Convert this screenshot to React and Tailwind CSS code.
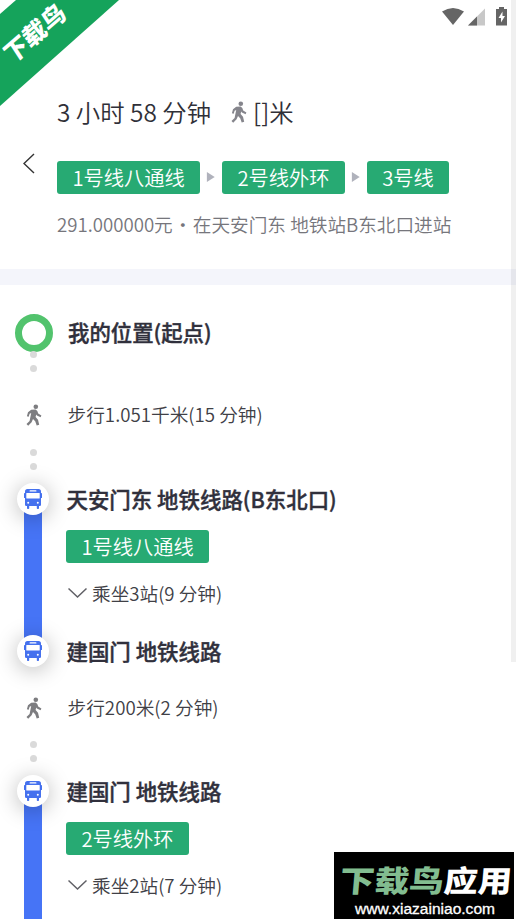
const lines = ["1号线八通线", "2号线外环", "3号线"];

const Walker = ({ className }) => (
  <svg viewBox="0 0 16 22" className={className} fill="currentColor">
    <circle cx="9.8" cy="2.7" r="2.3" />
    <path d="M5.2 5.8L9.6 5.4L11.3 7L12.2 9.6L15.4 11.5L14.6 13.2L10.9 11.4L10.2 10.4L9.6 13L12 15.8L13.2 20.8L10.7 21.5L9.2 17.2L7 15L5.6 18.3L2.2 21.7L0.5 20L3.6 17L5.2 9L3.6 9.8L2.7 12.7L0.9 12.2L2 8.3Z" />
  </svg>
);

const BusStop = () => (
  <div className="relative z-10 flex size-8 shrink-0 items-center justify-center rounded-full bg-white shadow-[0_3px_22px_rgba(0,0,0,0.28)]">
    <svg viewBox="0 0 18 20" className="h-5 w-[18px]" fill="#4571ee">
      <path d="M3.4 0H14.6Q17 0 17 2.6V15.7Q17 17 15.7 17H2.3Q1 17 1 15.7V2.6Q1 0 3.4 0Z" />
      <rect x="0" y="4" width="1.4" height="5" rx="0.6" />
      <rect x="16.6" y="4" width="1.4" height="5" rx="0.6" />
      <rect x="3" y="16" width="2.2" height="4" rx="0.8" />
      <rect x="12.8" y="16" width="2.2" height="4" rx="0.8" />
      <rect x="5.5" y="1.2" width="7" height="1.4" rx="0.7" fill="#fff" />
      <rect x="2.3" y="4" width="13.4" height="5.6" rx="0.5" fill="#fff" />
      <circle cx="4.2" cy="13.8" r="1" fill="#fff" />
      <circle cx="13.8" cy="13.8" r="1" fill="#fff" />
    </svg>
  </div>
);

const LineTag = ({ children }) => (
  <span className="flex h-[32.5px] w-fit items-center rounded-[3px] bg-[#27aa73] px-[15.5px] pt-px text-[20.25px] leading-none whitespace-nowrap text-white">
    {children}
  </span>
);

const Dots = () => (
  <div className="flex w-[67px] flex-col items-center gap-[7px]">
    <i className="size-[7px] rounded-full bg-[#dadada]" />
    <i className="size-[7px] rounded-full bg-[#dadada]" />
  </div>
);

const WalkRow = ({ children }) => (
  <div className="flex h-7 items-center">
    <div className="flex w-[67.5px] justify-center pt-px">
      <Walker className="h-[22px] w-4 text-[#7d7d80]" />
    </div>
    <span className="text-[18.7px] text-[#404046]">{children}</span>
  </div>
);

const StopName = ({ children }) => (
  <h2 className="h-8 pl-[0.5px] text-[21.45px] leading-8 font-medium text-[#30303c] [-webkit-text-stroke:0.4px_#30303c]">{children}</h2>
);

const RideInfo = ({ line, children }) => (
  <>
    <div className="mt-[15px]">
      <LineTag>{line}</LineTag>
    </div>
    <div className="mt-[16.5px] flex h-7 items-center gap-1 pl-[2px] text-[18.65px] text-[#404046]">
      <svg viewBox="0 0 20 12" className="h-3 w-5" fill="none" stroke="#606066" strokeWidth="1.5">
        <path d="M0.5 1.5L9.5 10L18.5 1.5" />
      </svg>
      <span>{children}</span>
    </div>
  </>
);

// corner banner
const Ribbon = () => (
  <svg className="absolute top-0 left-0" width="120" height="107">
    <path d="M0 14L16 0H119L0 106Z" fill="#15a35b" />
    <text
      transform="translate(11.5 65) rotate(-41) skewX(-8)"
      fontSize="24"
      fontWeight="900"
      fill="#fff"
      textLength="74"
      lengthAdjust="spacingAndGlyphs"
    >
      下载鸟
    </text>
  </svg>
);

const Watermark = () => (
  <svg className="absolute right-[2px] bottom-0 bg-black" width="180" height="67">
    <g fontSize="30" fontWeight="900" transform="translate(5 40) skewX(-5)">
      <text fill="#82bd90" textLength="104" lengthAdjust="spacingAndGlyphs">下载鸟</text>
      <text x="104" fill="#fff" textLength="68" lengthAdjust="spacingAndGlyphs">应用</text>
    </g>
    <text
      x="21"
      y="62"
      fontSize="15.5"
      fill="#fff"
      stroke="#fff"
      strokeWidth="0.3"
      textLength="140"
      lengthAdjust="spacingAndGlyphs"
      className="font-['Liberation_Sans',sans-serif]"
    >
      www.xiazainiao.com
    </text>
  </svg>
);

const StatusBar = () => (
  <div className="flex h-[34px] items-center justify-end pr-[9px]">
    <svg width="65" height="20" viewBox="0 0 65 20" fill="#656565">
      <path d="M0 4.5Q11 -2.5 22 4.5L11 18Z" />
      <path d="M26 18.5L43 1.5V18.5Z" fill="#c8c8c8" />
      <path d="M26 18.5L35 9.5V18.5Z" />
      <path d="M57 0H62V2H65V18.5H54V2H57Z" />
      <path d="M60.5 4.5L56.5 11H59V15.5L63 9H60.5Z" fill="#fff" />
    </svg>
  </div>
);

export default function App() {
  return (
    <div className="relative h-[919px] w-[516px] overflow-hidden bg-white font-['Noto_Sans_CJK_SC',sans-serif] font-[350]">
      <header className="h-[269px]">
        <StatusBar />
        <div className="flex pt-[58px]">
          <div className="w-[57px] pt-[61px] pl-[23px]">
            <svg width="12" height="21" viewBox="0 0 12 21" fill="none" stroke="#333" strokeWidth="1.4">
              <path d="M11 1L1 10.5L11 20" />
            </svg>
          </div>
          <div className="flex-1">
            <div className="flex h-10 items-center text-[24.4px] text-[#303038]">
              <span>3 小时 58 分钟</span>
              <Walker className="mr-[6px] ml-5 h-[22px] w-4 text-[#85858c]" />
              <span>[]米</span>
            </div>
            <div className="mt-[29px] flex items-center">
              {lines.map((line, index) => (
                <div key={line} className="flex items-center">
                  {index > 0 && (
                    <svg width="21.6" height="10" viewBox="0 0 22 10" fill="#b0b2bc">
                      <path d="M7 0L15 5L7 10Z" />
                    </svg>
                  )}
                  <LineTag>{line}</LineTag>
                </div>
              ))}
            </div>
            <p className="mt-[15.5px] text-[18.65px] leading-[30px] whitespace-nowrap text-[#76767c]">
              291.000000元<span className="inline-flex w-[20px] justify-center">·</span>在天安门东 地铁站B东北口进站
            </p>
          </div>
        </div>
      </header>

      <div className="h-4 bg-[#f4f5fb]" />

      <main className="pt-[29px]">
        <div className="flex h-[37px] items-center">
          <div className="w-[68px] pl-[15px]">
            <div className="size-[38px] rounded-full border-[7px] border-[#52c36d]" />
          </div>
          <h2 className="text-[21.4px] font-medium text-[#30303c] [-webkit-text-stroke:0.4px_#30303c]">我的位置(起点)</h2>
        </div>
        <Dots />
        <div className="pt-[28px] pb-[21px]">
          <WalkRow>步行1.051千米(15 分钟)</WalkRow>
        </div>
        <Dots />

        <section className="mt-[13px] flex h-[184px]">
          <div className="flex w-[66px] flex-col items-center">
            <BusStop />
            <div className="-my-[3px] w-[18px] flex-1 bg-[#4674f6]" />
            <BusStop />
          </div>
          <div>
            <StopName>天安门东 地铁线路(B东北口)</StopName>
            <RideInfo line="1号线八通线">乘坐3站(9 分钟)</RideInfo>
            <div className="mt-[28px]">
              <StopName>建国门 地铁线路</StopName>
            </div>
          </div>
        </section>

        <div className="pt-[26px] pb-[20px]">
          <WalkRow>步行200米(2 分钟)</WalkRow>
        </div>
        <Dots />

        <section className="mt-[13px] flex h-[150px]">
          <div className="flex w-[66px] flex-col items-center">
            <BusStop />
            <div className="-mt-[3px] w-[18px] flex-1 bg-[#4674f6]" />
          </div>
          <div>
            <StopName>建国门 地铁线路</StopName>
            <RideInfo line="2号线外环">乘坐2站(7 分钟)</RideInfo>
          </div>
        </section>
      </main>

      <Ribbon />
      <div className="absolute top-0 right-0 h-[662px] w-[5px] bg-black/6" />
      <Watermark />
    </div>
  );
}
